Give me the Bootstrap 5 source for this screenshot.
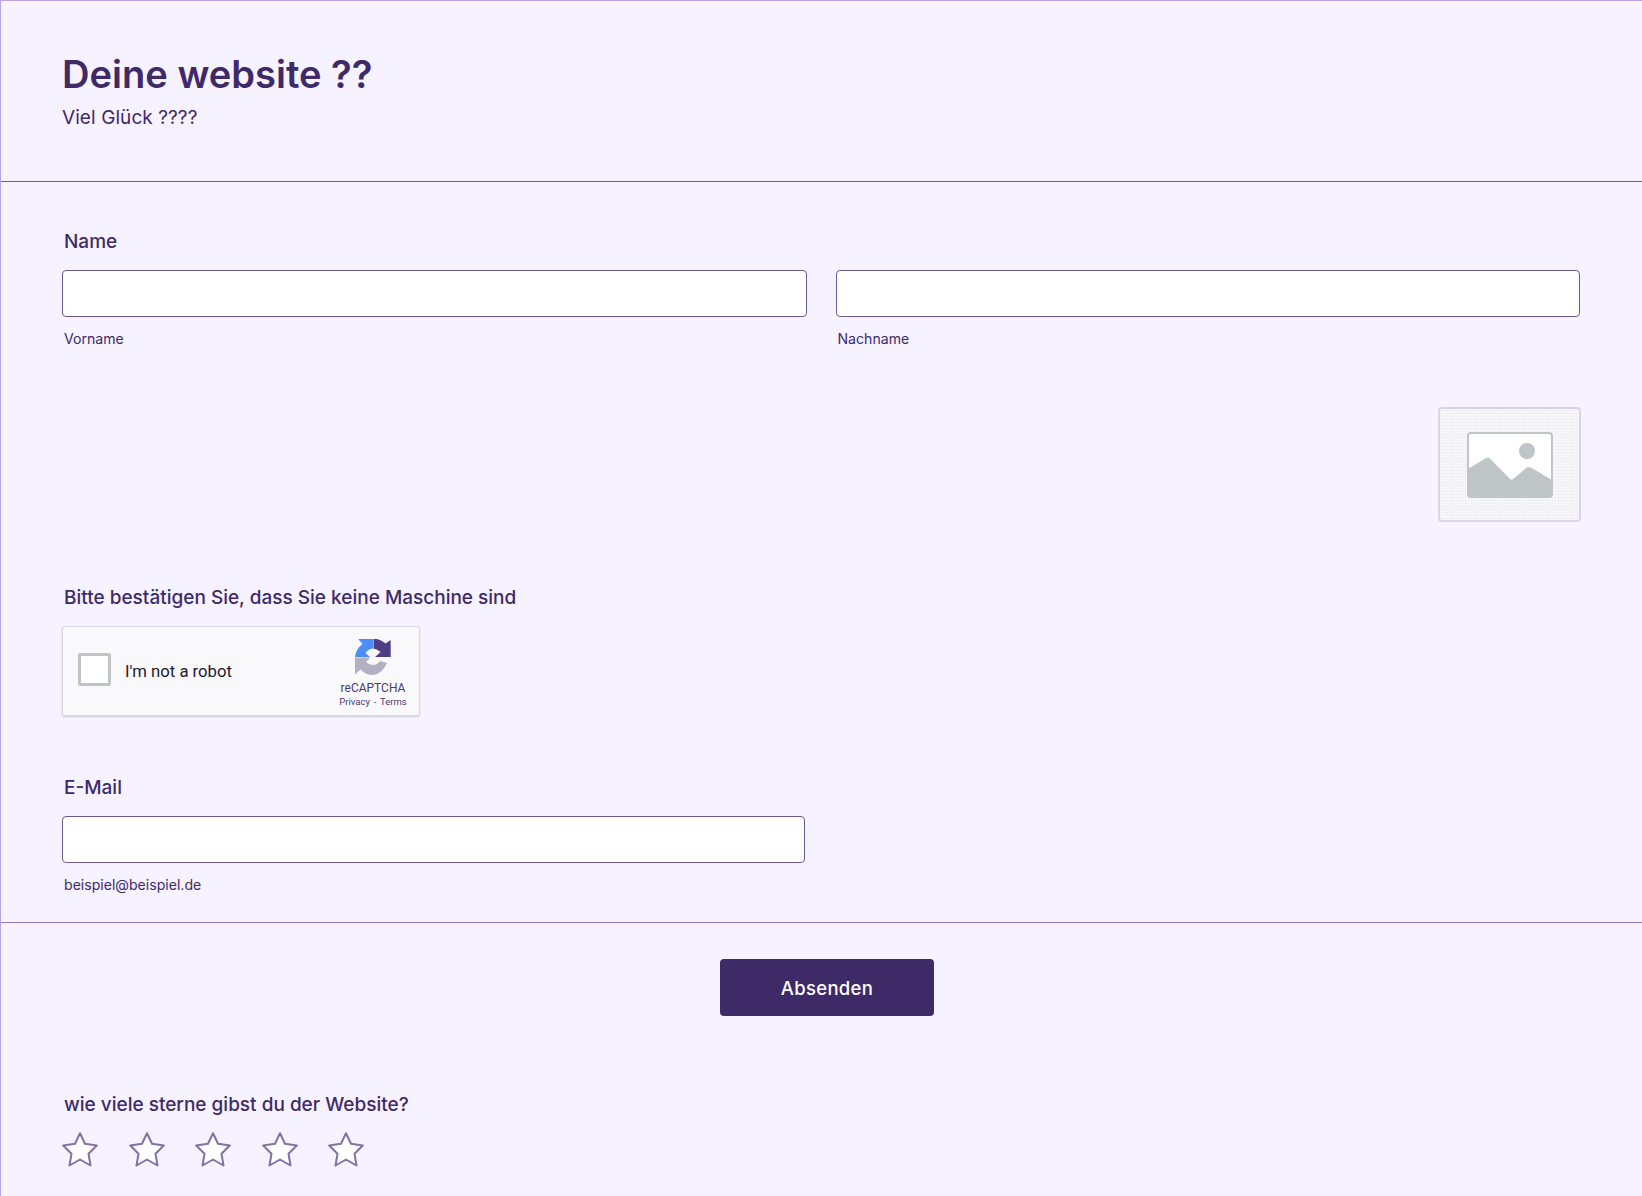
<!DOCTYPE html>
<html lang="de">
<head>
<meta charset="utf-8">
<title>Deine website ??</title>
<link href="https://cdn.jsdelivr.net/npm/bootstrap@5.3.0/dist/css/bootstrap.min.css" rel="stylesheet">
<style>
html,body{height:100%;}
body{background:#f6f2ff;color:#3f2a68;font-family:Inter,"Liberation Sans",sans-serif;}
.sheet{height:1196px;overflow:hidden;border-top:1px solid #b9a3e3;border-left:1px solid #b9a3e3;background:#f6f2ff;}
.head-zone{height:181px;padding:51px 61px 0;border-bottom:1px solid #6b5a8e;}
.form-title{font-size:38.1px;font-weight:600;line-height:44px;margin:0;color:#3f2a68;}
.form-sub{font-size:19px;line-height:23px;margin:10px 0 0;letter-spacing:.08px;}
.body-zone{padding:0 61px;}
.field-lab{font-size:19px;line-height:23px;font-weight:500;margin:0 0 17px 2px;display:block;}
.name-field{padding-top:48px;}
.txt-input{height:47px;border:1px solid #6b5a8e;border-radius:4px;background:#fff;box-shadow:none;}
.hint-txt{font-size:14.1px;line-height:17px;margin:13px 0 0 2px;display:block;}
.name-row{gap:29px;}
.name-row>div{width:744.5px;}
.pic-row{margin-top:60px;}
.pic-box{width:143px;height:115px;border:2px solid #d9d4e8;border-radius:4px;background-color:#f6f6f8;background-image:radial-gradient(#e6e6ec 0.6px,transparent 0.7px);background-size:3px 3px;}
.cap-field{margin-top:63.5px;}
.cap-box{width:358px;height:90px;background:#f9f9fb;border:1px solid #dcd7e6;border-radius:3px;box-shadow:0 1px 2px rgba(60,40,100,.2);padding:0 11px 0 15px;}
.cap-check{width:33px;height:33px;background:#fff;border:3px solid #c1c3c7;border-radius:2px;margin-top:-2px;}
.cap-text{font-family:Roboto,"Liberation Sans",sans-serif;font-size:16.7px;color:#1d1a2e;margin-left:14px;padding-top:2px;}
.cap-brand{width:70px;margin-top:4px;font-family:Roboto,"Liberation Sans",sans-serif;color:#4a3a72;line-height:1;}
.cap-name{font-size:12px;margin-top:7px;}
.cap-links{font-size:9.5px;margin-top:3px;white-space:nowrap;word-spacing:1.5px;}
.mail-field{margin-top:60.5px;}
.mail-field .txt-input{width:743px;}
.foot-zone{margin-top:29px;border-top:1px solid #9078c6;}
.send-btn{width:214px;height:57px;margin-top:35.5px;margin-left:719px;padding-top:10px;padding-bottom:6px;background:#3f2a68;border:0;border-radius:4px;color:#fff;font-size:18.5px;font-weight:500;letter-spacing:.3px;}
.send-btn:hover{background:#3f2a68;color:#fff;}
.rate-field{margin-top:77px;padding:0 61px;}
.rate-lab{margin-bottom:16px;}
.star-row{gap:30.5px;}
</style>
</head>
<body>
<div class="sheet">
  <header class="head-zone">
    <h1 class="form-title">Deine website ??</h1>
    <p class="form-sub">Viel Glück ????</p>
  </header>
  <form>
    <div class="body-zone">
      <div class="name-field">
        <label class="field-lab">Name</label>
        <div class="d-flex name-row">
          <div><input class="form-control txt-input" type="text"><span class="hint-txt">Vorname</span></div>
          <div><input class="form-control txt-input" type="text"><span class="hint-txt">Nachname</span></div>
        </div>
      </div>
      <div class="d-flex justify-content-end pic-row">
        <div class="pic-box d-flex align-items-center justify-content-center">
          <svg width="86" height="66" viewBox="0 0 86 66" aria-hidden="true">
            <rect x="1" y="1" width="84" height="64" rx="3" fill="#fff" stroke="#bfc4c7" stroke-width="2"/>
            <path d="M1 37 L19 26 Q21 25 23 26.500 L43 47 Q44.500 48.500 46 47 L60 35.500 Q62 34.500 64 35.500 L85 48 V62 Q85 65 82 65 H4 Q1 65 1 62 Z" fill="#bfc4c7"/>
            <circle cx="60" cy="19" r="8" fill="#bfc4c7"/>
          </svg>
        </div>
      </div>
      <div class="cap-field">
        <label class="field-lab">Bitte bestätigen Sie, dass Sie keine Maschine sind</label>
        <div class="cap-box d-flex align-items-center">
          <span class="cap-check flex-shrink-0"></span>
          <span class="cap-text flex-grow-1">I'm not a robot</span>
          <div class="cap-brand d-flex flex-column align-items-center">
            <svg width="36" height="36" viewBox="0 0 36 36" aria-hidden="true">
              <path d="M18 0 V9.500 Q13 10 10.500 14 L15 18 H0 Q0.500 10.500 7.500 5 L3.300 0 Z" fill="#4e8cf7"/>
              <path d="M18.500 0 H22 Q27 1 30.500 4.500 L35.700 1 V18 H20 L25.500 13 Q22.500 10 18.500 9.500 Z" fill="#4f3d86"/>
              <path d="M0 18.500 H15.500 L11 23 Q14 26 18 26 Q22 26 25 22 L32 24 Q27 35 18 36 Q10.500 36 5.500 30.500 L0 35.500 Z" fill="#b4b0c4"/>
            </svg>
            <span class="cap-name">reCAPTCHA</span>
            <span class="cap-links">Privacy - Terms</span>
          </div>
        </div>
      </div>
      <div class="mail-field">
        <label class="field-lab">E-Mail</label>
        <input class="form-control txt-input" type="email">
        <span class="hint-txt">beispiel@beispiel.de</span>
      </div>
    </div>
    <div class="foot-zone">
      <button type="button" class="btn send-btn d-block">Absenden</button>
      <div class="rate-field">
        <label class="field-lab rate-lab">wie viele sterne gibst du der Website?</label>
        <div class="d-flex star-row">
          <svg width="36" height="35" viewBox="0 0 36 35" aria-hidden="true"><use href="#stardef"/></svg>
          <svg width="36" height="35" viewBox="0 0 36 35" aria-hidden="true"><use href="#stardef"/></svg>
          <svg width="36" height="35" viewBox="0 0 36 35" aria-hidden="true"><use href="#stardef"/></svg>
          <svg width="36" height="35" viewBox="0 0 36 35" aria-hidden="true"><use href="#stardef"/></svg>
          <svg width="36" height="35" viewBox="0 0 36 35" aria-hidden="true"><use href="#stardef"/></svg>
        </div>
      </div>
    </div>
  </form>
</div>
<svg width="0" height="0" class="position-absolute" aria-hidden="true">
  <symbol id="stardef" viewBox="0 0 36 35">
    <path d="M18 1.200 L23 11.800 L34.800 13.500 L26.500 21.800 L28.500 33.500 L18 27.500 L7.500 33.500 L9.500 21.800 L1.200 13.500 L13 11.800 Z" fill="#fff" stroke="#8270a8" stroke-width="2" stroke-linejoin="round"/>
  </symbol>
</svg>
<script src="https://cdn.jsdelivr.net/npm/bootstrap@5.3.0/dist/js/bootstrap.bundle.min.js"></script>
</body>
</html>
